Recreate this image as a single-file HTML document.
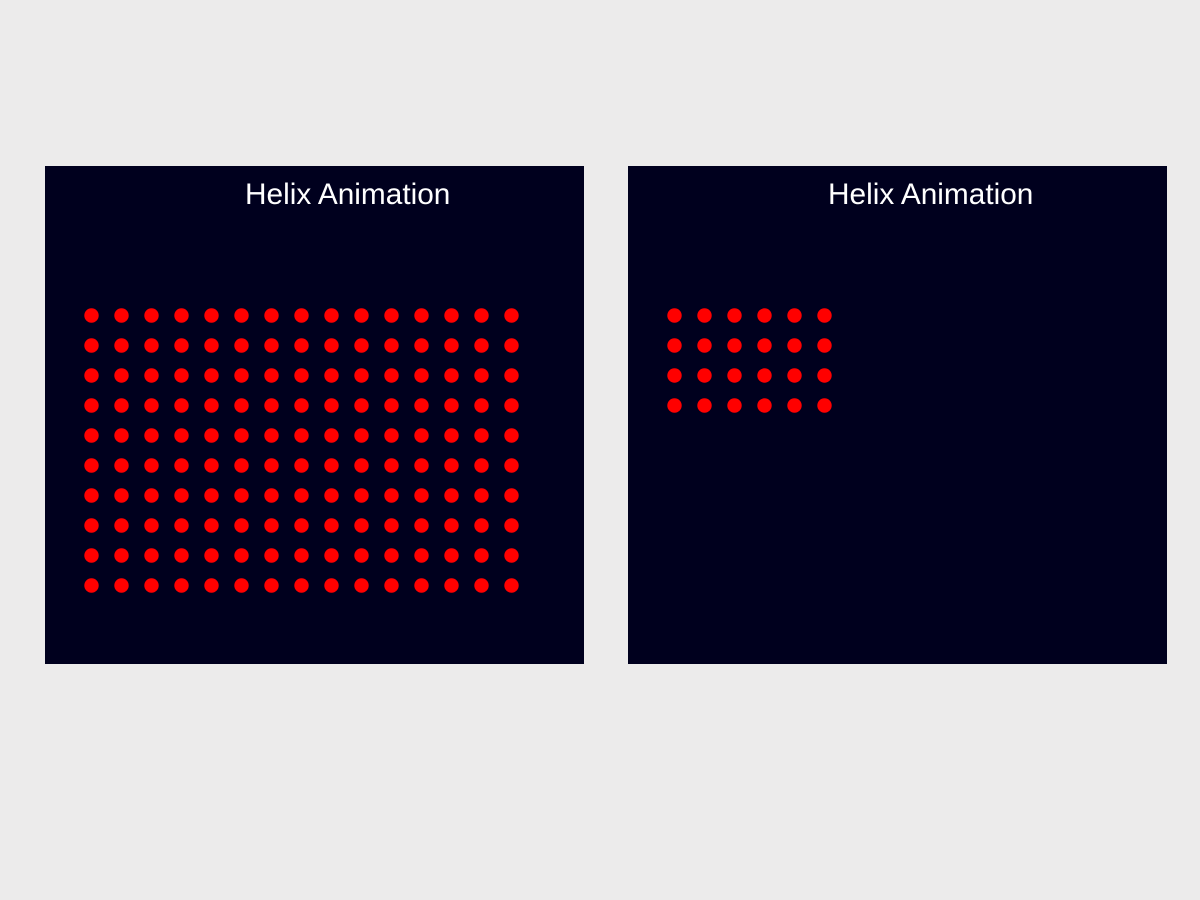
<!DOCTYPE html>
<html><head><style>
html,body{margin:0;padding:0;width:1200px;height:900px;background:#ecebeb;overflow:hidden}
.p{position:absolute;top:166px;width:539px;height:498px;background:#00001e}
.t{position:absolute;top:178px;font:29.8px "Liberation Sans",sans-serif;color:#fff;white-space:nowrap}
svg{position:absolute;left:0;top:0}
</style></head><body>
<div class="p" style="left:45px"></div>
<div class="p" style="left:628px"></div>
<div class="t" style="left:245px">Helix Animation</div>
<div class="t" style="left:828px">Helix Animation</div>
<svg width="1200" height="900" id="s"></svg>
<script>
var s=document.getElementById('s'),h='';
for(var r=0;r<10;r++)for(var c=0;c<15;c++)h+='<circle cx="'+(91.5+c*30)+'" cy="'+(315.5+r*30)+'" r="7.2" fill="#ff0000"/>';
for(var r=0;r<4;r++)for(var c=0;c<6;c++)h+='<circle cx="'+(674.5+c*30)+'" cy="'+(315.5+r*30)+'" r="7.2" fill="#ff0000"/>';
s.innerHTML=h;
</script>
</body></html>
